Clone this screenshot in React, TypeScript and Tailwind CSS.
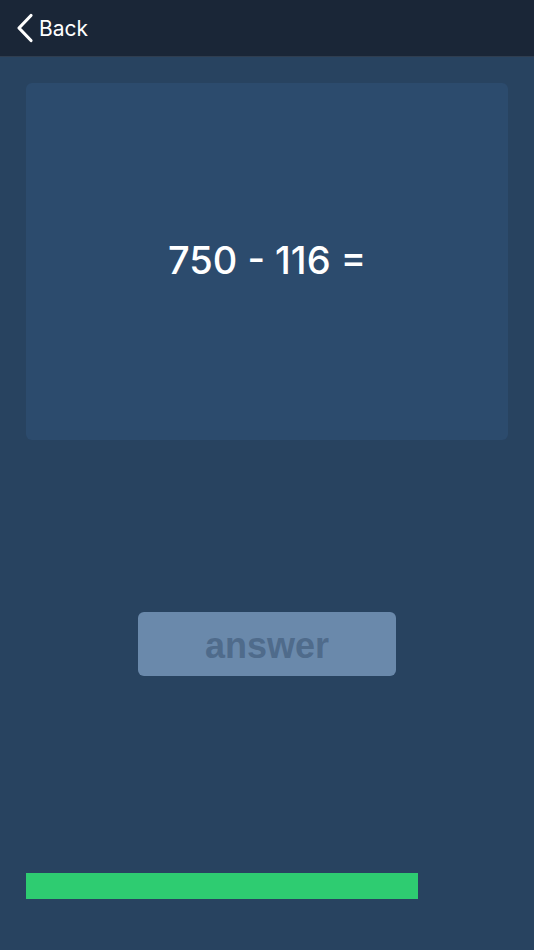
import React from "react";

export default function App() {
  return (
    <div
      className="w-[534px] h-[950px] bg-[#284360] flex flex-col overflow-hidden"
      style={{ fontFamily: '"Liberation Sans", Arial, sans-serif' }}
    >
      <div className="h-[57px] bg-[#1a2637] border-b border-[#2f3d4f] flex items-center pl-[16px] shrink-0">
        <svg width="18" height="30" viewBox="0 0 18 30" className="mr-[5px] mt-[-1px]">
          <path d="M15 2.5 L3 15 L15 27.5" fill="none" stroke="white" strokeWidth="3.2" strokeLinecap="round" strokeLinejoin="round" />
        </svg>
        <span className="text-white text-[21px] leading-none mt-[1px]" style={{ fontFamily: 'Inter, "Liberation Sans", sans-serif' }}>Back</span>
      </div>
      <div className="px-[26px] pt-[26px]">
        <div className="h-[357px] rounded-[6px] bg-[#2c4b6d] flex items-center justify-center">
          <span className="text-white text-[38px] font-medium mt-[-2px]" style={{ fontFamily: 'Inter, "Liberation Sans", sans-serif' }}>
            750 - 116 =
          </span>
        </div>
      </div>
      <div className="flex justify-center mt-[172px]">
        <div className="w-[258px] h-[64px] rounded-[6px] bg-[#6a89ab] flex items-center justify-center">
          <span className="text-[#4f6b8b] text-[36px] font-bold leading-none mt-[3px]">answer</span>
        </div>
      </div>
      <div className="px-[26px] mt-[197px]">
        <div className="w-[392px] h-[26px] bg-[#2ecc71]" />
      </div>
    </div>
  );
}
